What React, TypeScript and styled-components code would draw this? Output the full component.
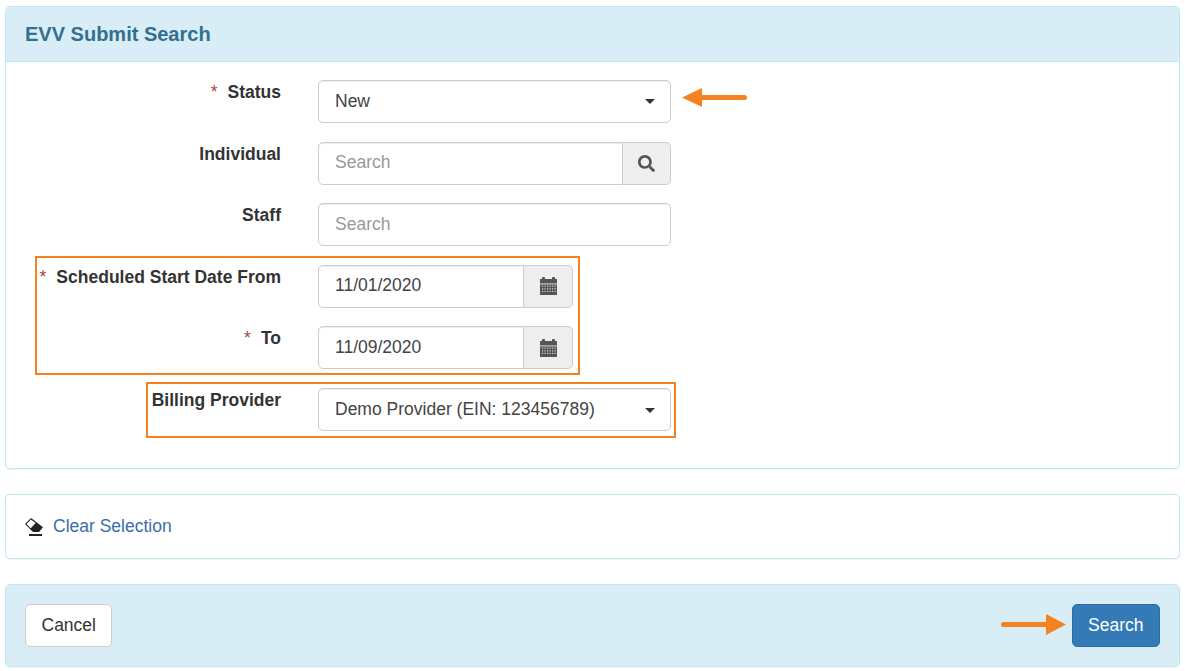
import React from "react";
import styled, { createGlobalStyle } from "styled-components";
import { FaSearch } from "react-icons/fa";

const Global = createGlobalStyle`
  html, body { margin: 0; padding: 0; background: #fff; }
  body { font-family: "Liberation Sans", Arial, sans-serif; font-size: 17.5px; color: #333; }
`;

const Page = styled.div`
  position: relative;
  width: 1185px;
  height: 671px;
  padding: 6px 5px 0;
  box-sizing: border-box;
  overflow: hidden;
`;

const Panel = styled.section<{ $gap?: number }>`
  border: 1px solid #bce8f1;
  border-radius: 5px;
  background: #fff;
  margin-bottom: ${(p) => p.$gap ?? 0}px;
  box-shadow: 0 1px 1px rgba(0, 0, 0, 0.05);
  overflow: hidden;
`;

const PanelHeader = styled.header`
  height: 55px;
  box-sizing: border-box;
  background: #d9edf7;
  border-bottom: 1px solid #bce8f1;
  padding: 0 19px;
  display: flex;
  align-items: center;
  color: #31708f;
  font-size: 20px;
  font-weight: 700;
`;

const Form = styled.form`
  height: 406px;
  box-sizing: border-box;
  padding: 18px 0 0;
  display: flex;
  flex-direction: column;
  gap: 18.6px;
`;

const Row = styled.div`
  display: grid;
  grid-template-columns: 275px 1fr;
  column-gap: 37px;
  height: 43px;
`;

const Label = styled.label`
  display: flex;
  justify-content: flex-end;
  align-items: flex-start;
  padding-top: 2px;
  line-height: 20px;
  font-size: 17.5px;
  font-weight: 700;
  color: #333;
  white-space: nowrap;
`;

const Required = styled.span`
  color: #a94442;
  font-weight: 400;
  font-size: 17.5px;
  margin-right: 10px;
`;

const Field = styled.div<{ $width: number }>`
  display: flex;
  width: ${(p) => p.$width}px;
  height: 43px;
`;

const Control = styled.div<{ $joined?: boolean; $placeholder?: boolean; $low?: boolean }>`
  flex: 1;
  min-width: 0;
  box-sizing: border-box;
  display: flex;
  align-items: center;
  justify-content: space-between;
  padding: ${(p) => (p.$low ? "1px 16px 0" : "0 16px 1px")};
  background: #fff;
  border: 1px solid #ccc;
  border-radius: ${(p) => (p.$joined ? "5px 0 0 5px" : "5px")};
  box-shadow: inset 0 1px 1px rgba(0, 0, 0, 0.075);
  color: ${(p) => (p.$placeholder ? "#999" : "#444")};
  font-size: 17.5px;
  white-space: nowrap;
`;

const Caret = styled.span`
  width: 0;
  height: 0;
  margin-right: -1px;
  margin-top: 1px;
  border-top: 5px solid #333;
  border-left: 5px solid transparent;
  border-right: 5px solid transparent;
`;

const Addon = styled.div<{ $width: number }>`
  width: ${(p) => p.$width}px;
  box-sizing: border-box;
  display: flex;
  align-items: center;
  justify-content: center;
  background: #eee;
  border: 1px solid #ccc;
  border-left: 0;
  border-radius: 0 5px 5px 0;
  color: #555;
`;

const ClearBody = styled.div`
  height: 63px;
  box-sizing: border-box;
  padding: 0 19px;
  display: flex;
  align-items: center;
  gap: 10px;
`;

const ClearLink = styled.a`
  color: #3b6da8;
  font-size: 17.5px;
`;

const Footer = styled.div`
  height: 81px;
  box-sizing: border-box;
  background: #d9edf7;
  padding: 0 19px;
  display: flex;
  align-items: center;
  justify-content: space-between;
`;

const Button = styled.button<{ $primary?: boolean }>`
  height: 43px;
  padding: 0 15.5px;
  border-radius: 5px;
  border: 1px solid ${(p) => (p.$primary ? "#2e6da4" : "#ccc")};
  background: ${(p) => (p.$primary ? "#337ab7" : "#fff")};
  color: ${(p) => (p.$primary ? "#fff" : "#333")};
  font-family: inherit;
  font-size: 17.5px;
`;

const Highlight = styled.div<{ $x: number; $y: number; $w: number; $h: number }>`
  position: absolute;
  left: ${(p) => p.$x}px;
  top: ${(p) => p.$y}px;
  width: ${(p) => p.$w}px;
  height: ${(p) => p.$h}px;
  box-sizing: border-box;
  border: 2.5px solid #f58220;
  pointer-events: none;
`;

const Arrow = styled.svg<{ $x: number; $y: number }>`
  position: absolute;
  left: ${(p) => p.$x}px;
  top: ${(p) => p.$y}px;
`;

const CalendarIcon = () => (
  <svg width="17" height="18" viewBox="0 0 17 18" aria-hidden="true">
    <path fill="#555" d="M0 2h2V1q0-1 1-1h1q1 0 1 1v1h7V1q0-1 1-1h1q1 0 1 1v1h2v4.6H0z" />
    <path fill="#555" d="M0 7.4h17V18H0z" />
    <g fill="#cfcfcf">
      {[2, 4.5, 7, 9.5, 12, 14.5].map((x) =>
        [8.6, 11.2, 13.8].map((y) => <rect key={`${x}-${y}`} x={x} y={y} width="1.2" height="1.2" />)
      )}
    </g>
  </svg>
);

const EraserIcon = () => (
  <svg width="18" height="18" viewBox="0 0 18 18" aria-hidden="true">
    <path fill="#222" d="M6 0 0 6l8 8h6l4-4.8z" />
    <path fill="#fff" d="M6 1.5 1.5 6l4.2 4.3L10.6 5z" />
    <rect x="4" y="16" width="13" height="2" fill="#222" />
  </svg>
);

const LeftArrow = () => (
  <Arrow $x={681} $y={87} width="66" height="21" viewBox="0 0 66 21">
    <path fill="#f58220" d="M1 10.5 21 1v7h42.5a2.5 2.5 0 0 1 0 5H21v7z" />
  </Arrow>
);

const RightArrow = () => (
  <Arrow $x={1001} $y={614} width="66" height="21" viewBox="0 0 66 21">
    <path fill="#f58220" d="M65 10.5 45 0v8H2.5a2.5 2.5 0 0 0 0 5H45v8z" />
  </Arrow>
);

export default function App() {
  return (
    <Page>
      <Global />
      <Panel $gap={25}>
        <PanelHeader>EVV Submit Search</PanelHeader>
        <Form>
          <Row>
            <Label><Required>*</Required>Status</Label>
            <Field $width={353}>
              <Control>New<Caret /></Control>
            </Field>
          </Row>
          <Row>
            <Label>Individual</Label>
            <Field $width={353}>
              <Control $joined $placeholder>Search</Control>
              <Addon $width={48}><FaSearch size={17} /></Addon>
            </Field>
          </Row>
          <Row>
            <Label>Staff</Label>
            <Field $width={353}>
              <Control $placeholder>Search</Control>
            </Field>
          </Row>
          <Row>
            <Label><Required>*</Required>Scheduled Start Date From</Label>
            <Field $width={255}>
              <Control $joined>11/01/2020</Control>
              <Addon $width={49}><CalendarIcon /></Addon>
            </Field>
          </Row>
          <Row>
            <Label><Required>*</Required>To</Label>
            <Field $width={255}>
              <Control $joined>11/09/2020</Control>
              <Addon $width={49}><CalendarIcon /></Addon>
            </Field>
          </Row>
          <Row>
            <Label>Billing Provider</Label>
            <Field $width={353}>
              <Control $low>Demo Provider (EIN: 123456789)<Caret /></Control>
            </Field>
          </Row>
        </Form>
      </Panel>
      <Panel $gap={25}>
        <ClearBody>
          <EraserIcon />
          <ClearLink>Clear Selection</ClearLink>
        </ClearBody>
      </Panel>
      <Panel>
        <Footer>
          <Button type="button">Cancel</Button>
          <Button type="button" $primary>Search</Button>
        </Footer>
      </Panel>
      <Highlight $x={35} $y={256} $w={545} $h={119} />
      <Highlight $x={146} $y={382} $w={530} $h={56} />
      <LeftArrow />
      <RightArrow />
    </Page>
  );
}
